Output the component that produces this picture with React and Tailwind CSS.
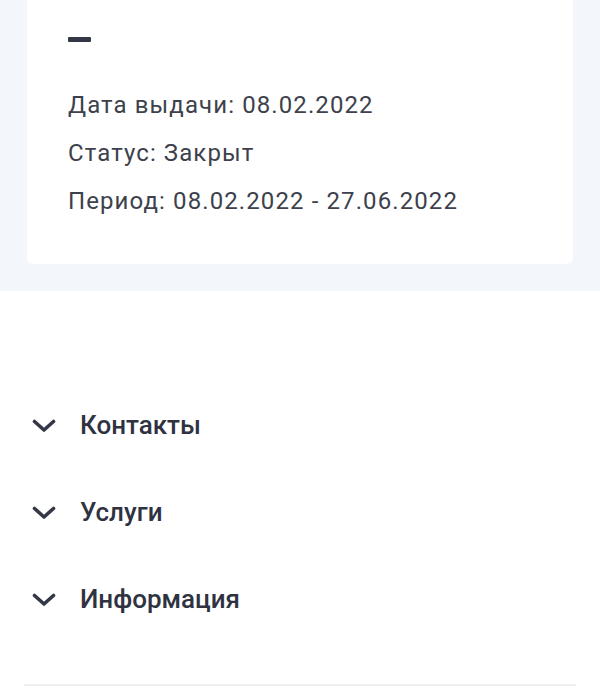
import React from "react";

function Chevron() {
  return (
    <svg width="24" height="14" viewBox="0 0 24 14" fill="none" className="shrink-0">
      <path d="M2.5 2.5 L12 11 L21.5 2.5" stroke="#343846" strokeWidth="3.6" strokeLinecap="round" strokeLinejoin="round" />
    </svg>
  );
}

export default function App() {
  const font = { fontFamily: "Roboto, 'Noto Sans', sans-serif" };
  const items = ["Контакты", "Услуги", "Информация"];
  return (
    <div className="w-[600px] h-[688px] overflow-hidden bg-white" style={font}>
      <div className="bg-[#f3f6fa] px-[27px] pb-[27px]">
        <div className="bg-white rounded-b-[6px] pl-[41px] pt-[37px] pb-[39px]">
          <div className="w-[23px] h-[5px] bg-[#343846] rounded-[1px]"></div>
          <div className="mt-[39px] text-[24px] leading-[48px] tracking-[1.1px] text-[#3d414c]">
            <div>Дата выдачи: 08.02.2022</div>
            <div>Статус: Закрыт</div>
            <div>Период: 08.02.2022 - 27.06.2022</div>
          </div>
        </div>
      </div>
      <div className="pt-[91px] px-[24px]">
        {items.map((t) => (
          <div key={t} className="h-[87px] flex items-center pl-[8px]">
            <Chevron />
            <span className="ml-[24px] text-[26px] font-medium text-[#2f3341]">{t}</span>
          </div>
        ))}
        <div className="mt-[41px] h-[2px] bg-[#eceef1]"></div>
      </div>
    </div>
  );
}
